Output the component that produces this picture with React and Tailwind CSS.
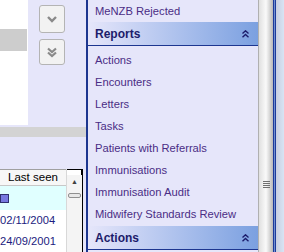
import React from 'react'

const items = [
	'Actions',
	'Encounters',
	'Letters',
	'Tasks',
	'Patients with Referrals',
	'Immunisations',
	'Immunisation Audit',
	'Midwifery Standards Review',
]

function DoubleUp() {
	return (
		<svg width="7" height="8" viewBox="0 0 7 8" className="block">
			<path d="M0.5 3.5 L3.5 0.8 L6.5 3.5 M0.5 7.2 L3.5 4.5 L6.5 7.2" fill="none" stroke="#1c1c6b" strokeWidth="1.4" />
		</svg>
	)
}

function Chevron({ double }) {
	return (
		<svg width="12" height="12" viewBox="0 0 12 12" className="block">
			{double ? (
				<path d="M2 2.5 L6 6 L10 2.5 M2 6.5 L6 10 L10 6.5" fill="none" stroke="#8a8a8a" strokeWidth="2.2" />
			) : (
				<path d="M2 4 L6 8 L10 4" fill="none" stroke="#8a8a8a" strokeWidth="2.4" />
			)}
		</svg>
	)
}

function PaneHeader({ title }) {
	return (
		<div className="h-[24px] flex items-center justify-between pl-[7px] pr-[9px] bg-gradient-to-r from-[#e6e6fa] to-[#7ba0e0] border-b border-[#1d3690]">
			<span className="text-[12px] font-bold text-[#1c1c6b]">{title}</span>
			<DoubleUp />
		</div>
	)
}

export default function App() {
	return (
		<div className="w-[284px] h-[252px] overflow-hidden flex bg-[#e6e6fa] font-['Liberation_Sans',Arial,sans-serif]">
			{/* left panel */}
			<div className="w-[86px] flex flex-col shrink-0">
				<div className="h-[132px] flex">
					<div className="w-[28px] bg-white">
						<div className="mt-[29px] h-[22px] w-[27px] bg-[#cdcdcd]"></div>
					</div>
					<div className="flex-1 flex flex-col gap-[6px] pl-[11px] pt-[5px]">
						<div className="w-[26px] h-[28px] rounded-[3px] border border-[#b4b4b4] bg-[#f2f2f2] flex items-center justify-center">
							<Chevron />
						</div>
						<div className="w-[26px] h-[26px] rounded-[3px] border border-[#b4b4b4] bg-[#f2f2f2] flex items-center justify-center">
							<Chevron double />
						</div>
					</div>
				</div>
				<div className="h-[2px]"></div>
				<div className="h-[10px] bg-[#d3d3d3]"></div>
				<div className="h-[34px]"></div>
				<div className="flex-1 flex w-[83px] border-r border-black">
					<div className="w-[66px] flex flex-col bg-white border-t border-[#a0a0a0]">
						<div className="h-[16px] flex items-center justify-center bg-[#f7f7f7] border-b border-[#c8c8c8] text-[11.5px] text-black">
							Last seen
						</div>
						<div className="h-[24px] bg-[#e0ffff] flex items-center">
							<div className="w-[9px] h-[9px] border border-[#303070] bg-[#7878e0]"></div>
						</div>
						<div className="h-[21px] flex items-center pl-0 text-[11.2px] text-[#1c1c80]">02/11/2004</div>
						<div className="h-[21px] flex items-center pl-0 text-[11.2px] text-[#1c1c80]">24/09/2001</div>
					</div>
					<div className="w-[16px] flex flex-col bg-[#f4f4f4] border-l border-[#d8d8d8]">
						<div className="h-[6px] border-t border-r border-black bg-white"></div>
						<div className="h-[14px] flex items-center justify-center text-[7px] text-[#404040]">▲</div>
						<div className="mx-[1px] mt-[4px] h-[5px] rounded-[2px] border border-[#909090] bg-[#e8e8e8]"></div>
					</div>
				</div>
			</div>

			{/* task pane */}
			<div className="w-[172px] shrink-0 border-l-2 border-[#1d3690] flex flex-col">
				<div className="h-[22px] flex items-center pl-[7px] text-[11.2px] text-[#4a2d85]">MeNZB Rejected</div>
				<PaneHeader title="Reports" />
				<div className="pt-[3px] pb-[1px]">
					{items.map(i => (
						<div key={i} className="h-[22px] flex items-center pl-[7px] text-[11.2px] text-[#4a2d85]">{i}</div>
					))}
				</div>
				<PaneHeader title="Actions" />
			</div>

			{/* scrollbar and frame */}
			<div className="w-[15px] shrink-0 bg-gradient-to-r from-[#e0e0e0] via-[#fafafa] to-[#b8b8b8] border-l border-[#b0b0b0] flex flex-col items-center">
				<div className="mt-[181px] flex flex-col gap-[1px]">
					<div className="w-[7px] h-[1px] bg-[#707070]"></div>
					<div className="w-[7px] h-[1px] bg-[#707070]"></div>
					<div className="w-[7px] h-[1px] bg-[#707070]"></div>
					<div className="w-[7px] h-[1px] bg-[#707070]"></div>
				</div>
			</div>
			<div className="w-[3px] shrink-0 flex">
				<div className="w-[1px] bg-[#1d3a9a]"></div>
				<div className="w-[1px] bg-[#6f8fd0]"></div>
				<div className="w-[1px] bg-[#1d3a9a]"></div>
			</div>
			<div className="flex-1 bg-gradient-to-r from-[#c8cfe0] to-[#d8e4f4]"></div>
		</div>
	)
}
